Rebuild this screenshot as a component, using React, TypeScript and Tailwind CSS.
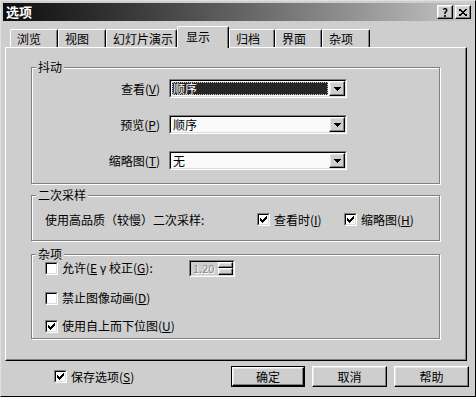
import React from 'react';

const raised =
  'border border-t-white border-l-white border-r-black border-b-black shadow-[inset_-1px_-1px_0_#808080,inset_1px_1px_0_#e4e4e4]';
const sunken = 'border border-t-[#808080] border-l-[#808080] border-r-white border-b-white';
const well = 'border border-t-black border-l-black border-r-[#dcdcdc] border-b-[#dcdcdc]';

function Check({ on }: { on?: boolean }) {
  return (
    <span className={`inline-flex w-[13px] h-[13px] shrink-0 ${sunken}`}>
      <span className={`flex flex-1 items-center justify-center bg-white ${well}`}>
        {on && (
          <svg width="7" height="7" viewBox="0 0 7 7" shapeRendering="crispEdges">
            <rect x="6" y="0" width="1" height="3" />
            <rect x="5" y="1" width="1" height="3" />
            <rect x="4" y="2" width="1" height="3" />
            <rect x="3" y="3" width="1" height="3" />
            <rect x="2" y="4" width="1" height="3" />
            <rect x="1" y="3" width="1" height="3" />
            <rect x="0" y="2" width="1" height="3" />
          </svg>
        )}
      </span>
    </span>
  );
}

function Combo({ value, focus }: { value: string; focus?: boolean }) {
  return (
    <div className={`flex w-[178px] h-[19px] ${sunken}`}>
      <div className={`flex flex-1 bg-[#fafafa] ${well}`}>
        <div className="flex flex-1 p-[1px]">
          <span
            className={`flex flex-1 items-center pl-[1px] leading-none ${
              focus ? 'bg-[#262626] text-white outline-1 outline-dotted outline-[#c8c8c8] -outline-offset-1' : ''
            }`}
          >
            {value}
          </span>
        </div>
        <div className={`flex w-[16px] items-center justify-center bg-[#cecece] ${raised}`}>
          <svg width="7" height="4" viewBox="0 0 7 4" shapeRendering="crispEdges">
            <path d="M0 0H7L3.5 4Z" fill="#000" />
          </svg>
        </div>
      </div>
    </div>
  );
}

function Group({ title, className, children }: { title: string; className?: string; children: React.ReactNode }) {
  return (
    <div
      className={`relative w-[409px] border border-[#808080] shadow-[1px_1px_0_#fff,inset_1px_1px_0_#fff] ${className ?? ''}`}
    >
      <span className="absolute -top-[8px] left-[4px] bg-[#cecece] px-[2px] leading-[14px]">{title}</span>
      {children}
    </div>
  );
}

const tabs = [
  { label: '浏览', w: 'w-[48px]' },
  { label: '视图', w: 'w-[48px]' },
  { label: '幻灯片演示', w: 'w-[71px]' },
  { label: '显示', w: 'w-[52px]', active: true },
  { label: '归档', w: 'w-[46px]' },
  { label: '界面', w: 'w-[47px]' },
  { label: '杂项', w: 'w-[48px]' },
];

export default function App() {
  return (
    <div className="w-[476px] h-[397px] bg-[#cecece] text-[12px] text-black font-[family-name:Noto_Sans_CJK_SC,Noto_Sans,sans-serif] border border-t-[#e0e0e0] border-l-[#e0e0e0] border-r-black border-b-black p-[2px] leading-[14px]">
      {/* title bar */}
      <div className="flex h-[18px] items-center justify-between bg-linear-to-r from-[#0e0e0e] to-[#c8c8c8] pl-[3px] pr-[2px]">
        <span className="text-white font-bold text-[13px]">选项</span>
        <div className="flex gap-[2px]">
          <span className={`flex w-[16px] h-[14px] items-center justify-center bg-[#cecece] font-bold text-[11px] ${raised}`}>
            ?
          </span>
          <span className={`flex w-[16px] h-[14px] items-center justify-center bg-[#cecece] ${raised}`}>
            <svg width="8" height="7" viewBox="0 0 8 7" shapeRendering="crispEdges">
              <path d="M0 0L8 7M8 0L0 7" stroke="#000" strokeWidth="1.6" />
            </svg>
          </span>
        </div>
      </div>

      {/* tabs */}
      <div className="mt-[6px] ml-[2px] flex h-[20px] items-end pl-[5px]">
        {tabs.map((t) =>
          t.active ? (
            <div
              key={t.label}
              className={`${t.w} relative z-10 -mb-[1px] h-[22px] rounded-t-[2px] border-t border-l border-t-white border-l-white border-r border-r-black bg-[#cecece] pl-[8px] pt-[3px] shadow-[inset_-1px_0_0_#808080]`}
            >
              {t.label}
            </div>
          ) : (
            <div
              key={t.label}
              className={`${t.w} h-[18px] rounded-t-[2px] border-t border-l border-t-white border-l-white border-r border-r-black pl-[6px] pt-[2px] shadow-[inset_-1px_0_0_#808080]`}
            >
              {t.label}
            </div>
          )
        )}
      </div>

      {/* panel */}
      <div className="ml-[2px] w-[462px] h-[314px] border border-t-white border-l-white border-r-black border-b-black shadow-[inset_-1px_-1px_0_#808080] pl-[25px] pt-[19px]">
        <Group title="抖动" className="h-[117px] pt-[11px]">
          <div className="flex flex-col gap-[17px]">
            {[
              { l: '查看', k: 'V', v: '顺序', f: true },
              { l: '预览', k: 'P', v: '顺序' },
              { l: '缩略图', k: 'T', v: '无' },
            ].map((r) => (
              <div key={r.l} className="flex items-center">
                <span className="w-[128px] text-right">
                  {r.l}(<u>{r.k}</u>)
                </span>
                <div className="ml-[9px]">
                  <Combo value={r.v} focus={r.f} />
                </div>
              </div>
            ))}
          </div>
        </Group>

        <Group title="二次采样" className="mt-[11px] h-[46px] flex items-center pt-[3px] pl-[13px]">
          <span className="w-[212px]">使用高品质（较慢）二次采样:</span>
          <Check on />
          <span className="ml-[4px] w-[70px]">
            查看时(<u>I</u>)
          </span>
          <Check on />
          <span className="ml-[4px]">
            缩略图(<u>H</u>)
          </span>
        </Group>

        <Group title="杂项" className="mt-[13px] h-[85px] pl-[13px] pt-[5px]">
          <div className="flex h-[16px] items-center">
            <Check />
            <span className="ml-[4px] w-[127px]">
              允许(<u>E</u> γ 校正(<u>G</u>):
            </span>
            <div className={`flex w-[46px] h-[17px] ${sunken}`}>
              <div className={`flex flex-1 ${well}`}>
                <span className="flex-1 pl-[2px] text-[11px] leading-[13px] text-[#8c8c8c] [text-shadow:1px_1px_0_#fff]">
                  1.20
                </span>
                <div className="flex w-[15px] flex-col">
                  <div className={`flex-1 bg-[#cecece] ${raised}`} />
                  <div className={`flex-1 bg-[#cecece] ${raised}`} />
                </div>
              </div>
            </div>
          </div>
          <div className="mt-[14px] flex h-[16px] items-center">
            <Check />
            <span className="ml-[4px]">
              禁止图像动画(<u>D</u>)
            </span>
          </div>
          <div className="mt-[12px] flex h-[16px] items-center">
            <Check on />
            <span className="ml-[4px]">
              使用自上而下位图(<u>U</u>)
            </span>
          </div>
        </Group>
      </div>

      {/* bottom row */}
      <div className="mt-[5px] flex h-[21px] items-center">
        <div className="ml-[51px] flex w-[177px] items-center">
          <Check on />
          <span className="ml-[4px]">
            保存选项(<u>S</u>)
          </span>
        </div>
        <div className="flex gap-[7px]">
          <div className="w-[74px] h-[21px] border border-black">
            <div className={`flex h-full items-center justify-center ${raised}`}>确定</div>
          </div>
          <div className={`flex w-[75px] h-[21px] items-center justify-center ${raised}`}>取消</div>
          <div className={`flex w-[75px] h-[21px] items-center justify-center ${raised}`}>帮助</div>
        </div>
      </div>
    </div>
  );
}
